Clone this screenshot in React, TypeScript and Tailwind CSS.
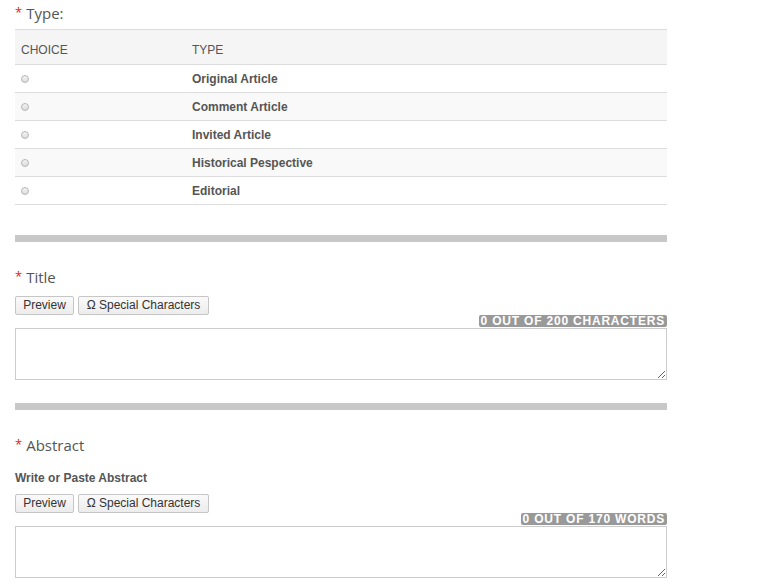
const TYPES = ['Original Article', 'Comment Article', 'Invited Article', 'Historical Pespective', 'Editorial'];

function Heading({ label, className }: { label: string; className: string }) {
  return (
    <div className={`font-['Open_Sans',sans-serif] text-[15px] text-[#555] ${className}`}>
      <span className="text-[#e02020] text-[13px] mr-[4px] align-[2px]">*</span>
      {label}
    </div>
  );
}

function Toolbar() {
  const btn = "h-[19px] px-[7px] border border-[#c6c6c6] rounded-[2px] bg-gradient-to-b from-[#fafafa] to-[#ececec] text-[12px] leading-[17px] text-[#333]";
  return (
    <div className="flex gap-[4px]">
      <button className={btn + " w-[59px]"}>Preview</button>
      <button className={btn + " w-[131px]"}>Ω Special Characters</button>
    </div>
  );
}

function Counter({ text }: { text: string }) {
  return (
    <div className="flex justify-end">
      <span className="bg-[#999] text-white font-bold text-[12px] leading-[12px] h-[12px] px-[2px] rounded-[2px] tracking-[0.8px] uppercase">
        {text}
      </span>
    </div>
  );
}

export default function App() {
  return (
    <div className="w-[766px] h-[588px] bg-white overflow-hidden font-['Liberation_Sans',Arial,sans-serif] text-[#555]">
      <div className="w-[652px] ml-[15px]">
        <Heading label="Type:" className="h-[29px] leading-[22px] pt-[1px]" />

        {/* type table */}
        <div className="border-t border-[#ddd]">
          <div className="flex h-[35px] items-center pt-[5px] bg-[#f5f5f5] border-b border-[#ddd] text-[12px] text-[#555]">
            <div className="w-[171px] pl-[6px]">CHOICE</div>
            <div className="pl-[6px]">TYPE</div>
          </div>
          {TYPES.map((t, i) => (
            <div key={t} className={`flex h-[28px] items-center border-b border-[#ddd] ${i % 2 === 1 ? 'bg-[#f9f9f9]' : 'bg-white'}`}>
              <div className="w-[171px] pl-[6px] flex items-center">
                <span className="w-[8px] h-[8px] rounded-full border border-[#b5b5b5] bg-gradient-to-b from-[#f4f4f4] to-[#dcdcdc]" />
              </div>
              <div className="pl-[6px] text-[12px] font-bold text-[#555]">{t}</div>
            </div>
          ))}
        </div>

        <div className="mt-[30px] h-[7px] bg-[#c8c8c8]" />

        <Heading label="Title" className="mt-[23px] h-[22px] leading-[22px] mb-[9px]" />
        <Toolbar />
        <Counter text="0 out of 200 characters" />
        <textarea className="block mt-[1px] w-[652px] h-[52px] border border-[#ccc] resize-y outline-none" />

        <div className="mt-[23px] h-[7px] bg-[#c8c8c8]" />

        <Heading label="Abstract" className="mt-[23px] h-[22px] leading-[22px]" />
        <div className="mt-[16px] h-[14px] leading-[14px] text-[12px] font-bold text-[#555]">Write or Paste Abstract</div>
        <div className="mt-[9px]">
          <Toolbar />
        </div>
        <Counter text="0 out of 170 words" />
        <textarea className="block mt-[1px] w-[652px] h-[52px] border border-[#ccc] resize-y outline-none" />
      </div>
    </div>
  );
}
